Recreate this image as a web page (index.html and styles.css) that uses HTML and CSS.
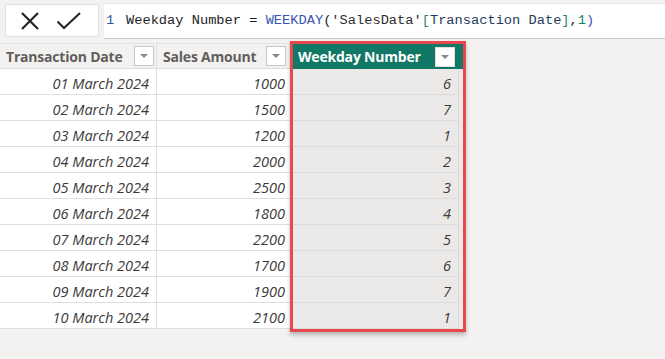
FILE: index.html
```html
<!DOCTYPE html>
<html>
<head>
<meta charset="utf-8">
<link rel="stylesheet" href="styles.css">
</head>
<body>
<div class="formula-bar">
  <div class="actions">
    <svg class="icon-x" width="20" height="20" viewBox="0 0 20 20"><path d="M2 2 L18 18 M18 2 L2 18" stroke="#252423" stroke-width="2.2" fill="none"/></svg>
    <svg class="icon-check" width="26" height="18" viewBox="0 0 26 18"><path d="M1.5 9.5 L8 16 L24 1" stroke="#252423" stroke-width="2" fill="none"/></svg>
  </div>
  <div class="formula">
    <span class="ln">1</span><span class="code"><span class="t-plain">Weekday Number = </span><span class="t-fn">WEEKDAY</span><span class="t-plain">(</span><span class="t-tbl">'SalesData'</span><span class="t-br">[</span><span class="t-col">Transaction Date</span><span class="t-br">]</span><span class="t-plain">,</span><span class="t-num">1</span><span class="t-fn">)</span></span>
  </div>
</div>
<div class="table">
  <div class="col col-date">
    <div class="hdr"><span class="hdr-text">Transaction Date</span><span class="dd"></span></div>
    <div class="cell">01 March 2024</div>
    <div class="cell">02 March 2024</div>
    <div class="cell">03 March 2024</div>
    <div class="cell">04 March 2024</div>
    <div class="cell">05 March 2024</div>
    <div class="cell">06 March 2024</div>
    <div class="cell">07 March 2024</div>
    <div class="cell">08 March 2024</div>
    <div class="cell">09 March 2024</div>
    <div class="cell">10 March 2024</div>
  </div>
  <div class="col col-sales">
    <div class="hdr"><span class="hdr-text">Sales Amount</span><span class="dd"></span></div>
    <div class="cell">1000</div>
    <div class="cell">1500</div>
    <div class="cell">1200</div>
    <div class="cell">2000</div>
    <div class="cell">2500</div>
    <div class="cell">1800</div>
    <div class="cell">2200</div>
    <div class="cell">1700</div>
    <div class="cell">1900</div>
    <div class="cell">2100</div>
  </div>
  <div class="col col-weekday">
    <div class="hdr"><span class="hdr-text">Weekday Number</span><span class="dd"></span></div>
    <div class="cell">6</div>
    <div class="cell">7</div>
    <div class="cell">1</div>
    <div class="cell">2</div>
    <div class="cell">3</div>
    <div class="cell">4</div>
    <div class="cell">5</div>
    <div class="cell">6</div>
    <div class="cell">7</div>
    <div class="cell">1</div>
  </div>
</div>
</body>
</html>
```
FILE: styles.css
```css
html, body {
  margin: 0;
  padding: 0;
  background: #f3f2f1;
}
body {
  width: 665px;
  height: 359px;
  overflow: hidden;
  font-family: "Open Sans", "Noto Sans", sans-serif;
}
.formula-bar {
  display: flex;
  align-items: flex-start;
  padding-top: 3px;
}
.actions {
  box-sizing: border-box;
  margin-top: 1px;
  margin-left: 5px;
  width: 94px;
  height: 33px;
  background: #fff;
  border: 1px solid #e1dfdd;
  border-radius: 2px;
  display: flex;
  align-items: center;
  padding-left: 14px;
}
.icon-x { margin-right: 16px; }
.formula {
  box-sizing: border-box;
  margin-left: 5px;
  flex: 1;
  height: 36px;
  background: #fff;
  border-top: 1px solid #e8e6e4;
  border-bottom: 1px solid #c8c6c4;
  display: flex;
  align-items: center;
  font-family: "Liberation Mono", "DejaVu Sans Mono", monospace;
  font-size: 13.7px;
  white-space: pre;
  padding-bottom: 1px;
}
.ln {
  color: #2b5797;
  margin-left: 2px;
  width: 20px;
}
.t-plain { color: #1e1e1e; }
.t-fn { color: #3a55b3; }
.t-tbl { color: #2d2d2d; }
.t-br { color: #2e8b57; }
.t-col { color: #1f3b5c; }
.t-num { color: #098658; }

.table {
  display: flex;
  align-items: flex-start;
  margin-top: 4px;
}
.col {
  display: flex;
  flex-direction: column;
}
.col-date {
  box-sizing: border-box;
  width: 157px;
  border-right: 1px solid #e1dfdd;
}
.col-sales {
  width: 133px;
}
.hdr {
  box-sizing: border-box;
  height: 26px;
  display: flex;
  align-items: center;
  justify-content: space-between;
  border-top: 1px solid #e6e4e2;
  border-bottom: 1px solid #e1dfdd;
  background: #f3f2f1;
  color: #605e5c;
  font-weight: 700;
  font-size: 14px;
  letter-spacing: -0.2px;
}
.col-date .hdr { padding-left: 6px; padding-right: 2px; }
.col-sales .hdr { padding-left: 6px; padding-right: 4px; }
.dd {
  box-sizing: border-box;
  width: 20px;
  height: 20px;
  background: #fff;
  border: 1px solid #c8c6c4;
  position: relative;
}
.dd::after {
  content: "";
  position: absolute;
  left: 5px;
  top: 7px;
  border-left: 4px solid transparent;
  border-right: 4px solid transparent;
  border-top: 4px solid #8a8886;
}
.cell {
  box-sizing: border-box;
  height: 26px;
  padding-top: 4px;
  line-height: 21px;
  background: #fff;
  border-bottom: 1px solid #e1dfdd;
  text-align: right;
  font-style: italic;
  font-size: 14.5px;
  color: #3b3a39;
}
.col-date .cell { padding-right: 7px; }
.col-sales .cell { padding-right: 5px; }

.col-weekday {
  box-sizing: border-box;
  width: 176px;
  margin-top: -2px;
  border: 3px solid #e8484d;
  background: #ebe9e7;
  box-shadow: 0 3px 4px rgba(0,0,0,0.25);
}
.col-weekday .hdr {
  height: 25px;
  border: none;
  background: #117865;
  color: #fff;
  padding-left: 5px;
  padding-right: 8px;
}
.col-weekday .dd { border-color: #e1dfdd; }
.col-weekday .cell {
  background: #ebe9e7;
  border-bottom: 1px solid #dcdad8;
  border-right: 1px solid #dcdad8;
  margin-right: 4px;
  padding-right: 7px;
}
```
